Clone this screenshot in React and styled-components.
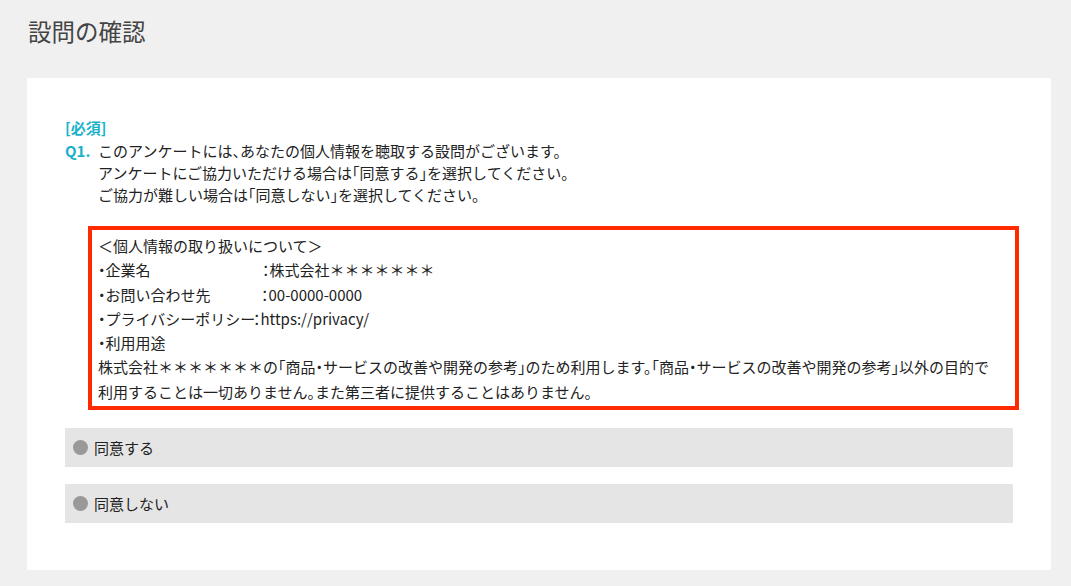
import React from "react";
import styled, { createGlobalStyle } from "styled-components";

const Global = createGlobalStyle`
  html, body { margin: 0; padding: 0; background: #f0f0f0; }
  body { font-family: "Noto Sans CJK JP", "Noto Sans", sans-serif; color: #222; }
`;

const Page = styled.div`
  width: 1071px;
  min-height: 586px;
  background: #f0f0f0;
  padding: 19px 0 0 27px;
  box-sizing: border-box;
`;

const Title = styled.h1`
  margin: 0 0 0 1px;
  font-size: 23.5px;
  line-height: 24px;
  font-weight: 400;
  color: #444;
`;

const Card = styled.section`
  margin-top: 35px;
  width: 1024px;
  background: #fff;
  box-sizing: border-box;
  padding: 39px 38px 47px 38px;
  font-size: 15px;
  font-feature-settings: "halt";
`;

const Required = styled.div`
  color: #17b1c9;
  font-weight: 700;
  line-height: 22px;
`;

const Question = styled.div`
  display: grid;
  grid-template-columns: 33px 1fr;
  line-height: 22px;
  margin-top: 1px;
`;

const QNum = styled.span`
  color: #17b1c9;
  font-weight: 700;
`;

const QText = styled.div`
  color: #222;
`;

const Notice = styled.div`
  margin: 20px -6px 0 23px;
  border: 4px solid #ff2a00;
  padding: 4px 6px 2px 6px;
  line-height: 24.3px;
  color: #222;
  white-space: nowrap;
`;

const Row = styled.div`
  display: flex;
`;

const Label = styled.span`
  display: inline-block;
  width: ${(p) => p.$w}px;
`;

const Options = styled.div`
  display: flex;
  flex-direction: column;
  gap: 17px;
  margin-top: 18px;
`;

const Option = styled.label`
  display: flex;
  align-items: center;
  gap: 6px;
  height: 39px;
  background: #e5e5e5;
  padding-left: 8px;
  color: #222;
  cursor: pointer;
`;

const Dot = styled.span`
  width: 15px;
  height: 15px;
  border-radius: 50%;
  background: #999;
  flex: none;
`;

export default function App() {
  return (
    <Page>
      <Global />
      <Title>設問の確認</Title>
      <Card>
        <Required>[必須]</Required>
        <Question>
          <QNum>Q1.</QNum>
          <QText>
            このアンケートには、あなたの個人情報を聴取する設問がございます。
            <br />
            アンケートにご協力いただける場合は「同意する」を選択してください。
            <br />
            ご協力が難しい場合は「同意しない」を選択してください。
          </QText>
        </Question>
        <Notice>
          <Row>＜個人情報の取り扱いについて＞</Row>
          <Row>
            <Label $w={164}>・企業名</Label>：株式会社＊＊＊＊＊＊＊
          </Row>
          <Row>
            <Label $w={163}>・お問い合わせ先</Label>：00-0000-0000
          </Row>
          <Row>
            <Label $w={155}>・プライバシーポリシー</Label>：https://privacy/
          </Row>
          <Row>・利用用途</Row>
          <Row>
            株式会社＊＊＊＊＊＊＊の「商品・サービスの改善や開発の参考」のため利用します。「商品・サービスの改善や開発の参考」以外の目的で
          </Row>
          <Row>利用することは一切ありません。また第三者に提供することはありません。</Row>
        </Notice>
        <Options>
          <Option>
            <Dot />
            同意する
          </Option>
          <Option>
            <Dot />
            同意しない
          </Option>
        </Options>
      </Card>
    </Page>
  );
}
